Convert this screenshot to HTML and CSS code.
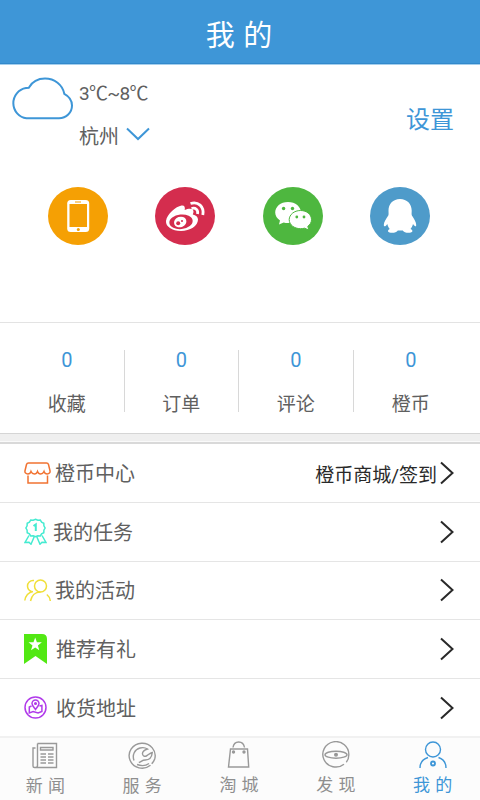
FILE: index.html
```html
<!DOCTYPE html>
<html lang="zh-CN">
<head>
<meta charset="utf-8">
<meta name="viewport" content="width=device-width, initial-scale=1">
<title>我的</title>
<link rel="stylesheet" href="styles.css">
</head>
<body>
<div class="app">
  <header class="header"><h1>我 的</h1></header>

  <section class="profile">
    <div class="weather">
      <svg class="cloud" width="64" height="44" viewBox="0 0 64 44"><path d="M16.500 41.300a15 15.300 0 0 1-.5-30.300l2.800-.3C22 5.200 28 1.600 35 1.600c9.500 0 17.500 6 19.300 15.200C59 19.300 62 24 62 28.500c0 7-5.700 12.800-13 12.800z"/></svg>
      <div class="weather-text">
        <span class="temp">3℃~8℃</span>
        <span class="city">杭州<svg width="24" height="14" viewBox="0 0 24 14"><path d="M1 1.500l11 10.500L23 1.500"/></svg></span>
      </div>
    </div>
    <a class="settings">设置</a>
    <div class="logins">
      <svg width="60" height="58" viewBox="0 0 60 58"><ellipse cx="30" cy="29" rx="30" ry="29" fill="#f5a004"/><rect x="19.200" y="13" width="22" height="32" rx="3.500" fill="#fff"/><path d="M21.500 17h17.500v23h-17.500zM27 14.500h6v1h-6z" fill="#f5a004"/><circle cx="30.300" cy="42.500" r="1.500" fill="#f5a004"/></svg>
      <svg width="60" height="58" viewBox="0 0 60 58"><ellipse cx="30" cy="29" rx="30" ry="29" fill="#d42d4e"/><path d="M11 34c1-7 10-14.500 15.500-15.500 3-.4 3.800 1.500 3.200 4.500 4-1.500 8.500-2 8.800 1.500.1 1-.5 2-.7 3 3 .8 5.200 2.500 5.200 5 0 6.500-8 11.500-17 11.500S10.500 39.500 11 34z" fill="#fff"/><ellipse cx="26" cy="34.800" rx="11.700" ry="7.300" transform="rotate(-6 26 34.800)" fill="#d42d4e"/><ellipse cx="25.200" cy="35" rx="6.300" ry="5.200" transform="rotate(-20 25.200 35)" fill="#fff"/><circle cx="23.200" cy="36.300" r="2" fill="#d42d4e"/><circle cx="27" cy="34" r="1" fill="#d42d4e"/><path d="M35.500 16.500c7.500-2.500 14 3 12.300 11.500M36.500 21.500c4-1.200 7 1.300 6 5.500" fill="none" stroke="#fff" stroke-width="2.800"/></svg>
      <svg width="60" height="58" viewBox="0 0 60 58"><ellipse cx="30" cy="29" rx="30" ry="29" fill="#4eb73f"/><path d="M25 15c7.500 0 13 4.700 13 10.600S32.500 36 25 36c-1.500 0-3-.2-4.300-.6L16 37.500l1-4c-3-2-4.800-4.700-4.800-7.900C12.200 19.700 17.500 15 25 15z" fill="#fff"/><path d="M37.500 23.500c6.300 0 11 4 11 9.200 0 2.800-1.500 5-3.700 6.600l1 3.700-4.200-1.800c-1.300.3-2.700.5-4.100.5-6.300 0-11.300-4-11.300-9s5-9.200 11.300-9.200z" fill="#fff" stroke="#4eb73f"/><g fill="#4eb73f"><circle cx="20.600" cy="21.500" r="1.700"/><circle cx="29.500" cy="21.500" r="1.700"/><circle cx="33.800" cy="30" r="1.400"/><circle cx="41" cy="30" r="1.400"/></g></svg>
      <svg width="60" height="58" viewBox="0 0 60 58"><ellipse cx="30" cy="29" rx="30" ry="29" fill="#4e9bca"/><path d="M30 12c7 0 11.700 5 11.700 11.500 0 2-.3 3.800.2 5 2.200 3.500 4.300 6.500 4.300 9.500 0 1-.3 1.500-1 1.200-1-.4-1.700-1.200-2.200-2.200-.5 2-1.400 3.700-2.500 5 1.600.8 2.300 1.600 1.800 2.600-.8 1.700-8 2-9.500-1h-5c-1.500 3-9 2.700-9.700 1-.5-1 .3-1.800 1.700-2.600-1.200-1.300-2-3-2.500-5-.6 1-1.200 1.800-2 2.200-.9.300-1.500-.2-1.500-1.200 0-3 2.300-6 4.500-9.500.5-1.200.2-3 .2-5C18.500 17 23 12 30 12z" fill="#fff"/></svg>
    </div>
  </section>

  <section class="stats">
    <div class="stat"><b>0</b><span>收藏</span></div>
    <div class="stat"><b>0</b><span>订单</span></div>
    <div class="stat"><b>0</b><span>评论</span></div>
    <div class="stat"><b>0</b><span>橙币</span></div>
  </section>
  <div class="separator"></div>

  <main class="menu">
    <a class="row">
      <svg class="icon orange" width="27" height="22" viewBox="0 0 27 22"><path d="M4.500 1h18c1.200 0 1.700.5 2 1.500l1.500 6.200c.4 2-1 3.300-2.800 3.300-2 0-2.800-1.200-3.200-2.500C19.200 11.300 18 12 16.600 12s-2.500-.9-3.100-2.500C12.900 11.100 11.800 12 10.400 12S7.800 11.300 7 9.500C6.600 10.800 5.800 12 3.800 12 2 12 .6 10.700 1 8.700l1.500-6.200C2.800 1.500 3.300 1 4.500 1zM4 13.500V21h19.500v-7.500"/></svg>
      <span class="label">橙币中心</span><span class="note">橙币商城/签到</span>
      <svg class="chevron" width="14" height="24" viewBox="0 0 14 24"><path d="M1 1.500L12.500 12 1 22.500"/></svg>
    </a>
    <a class="row narrow">
      <svg class="icon teal" width="23" height="27" viewBox="0 0 23 27"><path d="M11.500 1.200l2.300 1 2.500-.1 1.300 2 2.200 1.200.1 2.500 1.200 2.200-1.200 2.200-.1 2.500-2.200 1.200-1.300 2-2.500-.1-2.300 1-2.300-1-2.500.1-1.300-2-2.200-1.200-.1-2.500L1.900 10l1.200-2.200.1-2.500 2.200-1.200 1.300-2 2.500.1zM5 17.500l-4 7 4-.3 2 2 3.200-7.500M18 17.500l4 7-4-.3-2 2-3.200-7.500"/><path class="numeral" d="M9.500 8l2.300-1.600V13"/></svg>
      <span class="label">我的任务</span>
      <svg class="chevron" width="14" height="24" viewBox="0 0 14 24"><path d="M1 1.500L12.500 12 1 22.500"/></svg>
    </a>
    <a class="row">
      <svg class="icon yellow" width="27" height="23" viewBox="0 0 27 23"><circle cx="16.500" cy="7" r="6"/><path d="M10 1.600C6 1 3.500 4 3.500 7c0 2.500 1.500 4.500 4 5.500M.8 21.500c.7-4.500 3.700-8 8.200-9M6.500 22c1-5 4.500-9 10-9M22.800 15.500c2 1.500 3.200 3.700 3.500 6.500"/></svg>
      <span class="label">我的活动</span>
      <svg class="chevron" width="14" height="24" viewBox="0 0 14 24"><path d="M1 1.500L12.500 12 1 22.500"/></svg>
    </a>
    <a class="row">
      <svg class="icon" width="23" height="30" viewBox="0 0 23 30"><path d="M0 0h18q5 0 5 5v25l-11.500-8L0 30z" fill="#52e813"/><path d="M11.200 3.500l1.700 4.700 5 .1-4 3.100 1.400 4.900-4.100-2.900-4.200 2.900 1.500-4.900-4-3.100 5-.1z" fill="#fff"/></svg>
      <span class="label">推荐有礼</span>
      <svg class="chevron" width="14" height="24" viewBox="0 0 14 24"><path d="M1 1.500L12.500 12 1 22.500"/></svg>
    </a>
    <a class="row">
      <svg class="icon purple" width="23" height="23" viewBox="0 0 23 23"><circle cx="11.500" cy="11.500" r="10.500"/><path d="M11.500 13.500C9.500 10.800 8 9.300 8 7.500a3.500 3.500 0 0 1 7 0c0 1.800-1.500 3.300-3.500 6zM7.500 10L5.300 11v6l3.800-1.500 5 1.500 3.800-1.500v-6L15.500 10"/><circle cx="11.500" cy="7.500" r=".8"/></svg>
      <span class="label">收货地址</span>
      <svg class="chevron" width="14" height="24" viewBox="0 0 14 24"><path d="M1 1.500L12.500 12 1 22.500"/></svg>
    </a>
  </main>

  <nav class="tabs">
    <a class="tab low"><svg width="28" height="28" viewBox="0 0 28 28"><path d="M6.500 1.500h19v24h-22c-1 0-1.500-.5-1.500-1.500V6h2.500M6.500 1.500v22c0 1-.5 2-2 2M9.500 5.500h12.500v2.500H9.500z"/><path stroke-dasharray="5.500 2" d="M9.500 12h13M9.500 15h13M9.500 18h13M9.500 21h13"/></svg><span>新 闻</span></a>
    <a class="tab low"><svg width="28" height="28" viewBox="0 0 28 28"><path d="M22.500 23.300A13 12.500 0 1 1 26.700 17c-.7 2-1.700 3.500-3 4.700"/><path d="M6 18.500C4 13 6.500 7.500 12 6c3-.8 5.500-.3 7.500 1-3 1-5.300 2.500-5 5 .3 2 2.200 2.800 3.800 2 2-1 3.500-3 6-3.500-.5 4.500-3 7.500-7 7.500-3.500 0-4 2-6.500 2.500M9 22.500c4 1.500 8.500 1.500 12-1"/></svg><span>服 务</span></a>
    <a class="tab"><svg width="28" height="28" viewBox="0 0 28 28"><path d="M5.500 8h17l1.200 18H3.500zM8 6.500C8.500 3 11 1 13.700 1s5.200 2 5.800 5.500"/><circle cx="8.500" cy="11" r="1" class="solid"/><circle cx="19" cy="11" r="1" class="solid"/></svg><span>淘 城</span></a>
    <a class="tab"><svg width="28" height="28" viewBox="0 0 28 28"><path d="M22 23.200A13 12.700 0 1 1 26.800 14c0 3-1 5.500-2.500 7.300"/><ellipse cx="14" cy="13.700" rx="11" ry="3.500"/><circle cx="14" cy="13.700" r="1.300" class="solid"/></svg><span>发 现</span></a>
    <a class="tab active"><svg width="28" height="28" viewBox="0 0 28 28"><circle cx="14" cy="8.500" r="7.500"/><path d="M1 27c0-5 3-9 8-10.500M19.500 16.500c4.500 1.500 7.500 5.500 7.500 10.500"/><circle cx="14" cy="22.500" r="2" stroke-width="1.800"/></svg><span>我 的</span></a>
  </nav>
</div>
</body>
</html>
```
FILE: styles.css
```css
* { box-sizing: border-box; }

body {
  margin: 0;
  background: #fff;
  color: #606060;
  font-family: Roboto, "Noto Sans CJK SC", sans-serif;
}

svg { display: block; flex: none; fill: none; }

.app {
  display: flex;
  flex-direction: column;
  width: 480px;
  height: 800px;
  overflow: hidden;
}
.app > * { flex-shrink: 0; }

.header {
  height: 65px;
  padding-top: 8px;
  background: #3e96d7;
  border-bottom: 1px solid #a5cfed;
  box-shadow: inset 0 -1px #3289cb;
  color: #fff;
  text-align: center;
}

.header h1 {
  margin: 0;
  padding-right: 2px;
  font-size: 29px;
  font-weight: 400;
  line-height: 56px;
  word-spacing: 1.5px;
}

.profile {
  display: grid;
  grid-template-columns: 1fr auto;
  grid-template-rows: 122px 1fr;
  height: 258px;
  border-bottom: 1px solid #e3e3e3;
}

.weather { display: flex; padding: 12px 0 0 10px; }
.cloud { stroke: #3e96d7; stroke-width: 2; }
.weather-text { display: flex; flex-direction: column; padding-left: 5px; }
.temp { height: 34px; font-size: 19px; line-height: 34px; letter-spacing: -0.7px; }
.city { display: flex; align-items: center; gap: 7px; height: 48px; font-size: 20px; }
.city svg { stroke: #3e96d7; stroke-width: 2; margin-top: -3px; }
.settings { padding: 37px 26px 0 0; color: #3e96d7; font-size: 24px; line-height: 36px; }

.logins {
  grid-column: 1 / -1;
  display: flex;
  justify-content: space-between;
  align-items: flex-start;
  padding: 0 50px 0 48px;
}

.stats {
  display: grid;
  grid-template-columns: repeat(4, 114.5px);
  height: 110px;
  padding: 27px 0 0 10px;
}

.stat {
  display: flex;
  flex-direction: column;
  align-items: center;
  height: 62px;
  border-right: 1px solid #d8d8d8;
}
.stat:last-child { border-right: 0; }
.stat b { color: #3e96d7; font-size: 20px; font-weight: 400; line-height: 20px; }
.stat span { margin-top: 21px; font-size: 19px; line-height: 28px; }

.separator {
  height: 11px;
  background: #efefef;
  border-top: 1px solid #d5d5d5;
  border-bottom: 2px solid #d9d9d9;
  box-shadow: inset 0 -1px #fafafa;
}

.menu { height: 292px; }
.row {
  display: flex;
  align-items: center;
  height: 58.8px;
  padding: 0 26px 0 24px;
  border-bottom: 1px solid #e5e5e5;
}
.row:last-child { height: 56.8px; border-bottom: 0; }
.label { flex: 1; padding-top: 2px; font-size: 20px; line-height: 30px; }
.icon { stroke-width: 1.5; }
.row .icon { margin-right: 4px; }
.row .icon[width="23"] { margin-right: 9px; }
.row.narrow .icon[width="23"] { margin-right: 6px; }
.note { margin-right: 3px; padding-top: 1px; color: #292929; font-size: 19px; }
.chevron { stroke: #292929; stroke-width: 2; }
.orange { stroke: #f17332; }
.teal { stroke: #45ebd1; }
.teal .numeral { stroke-width: 2; }
.yellow { stroke: #f0df38; }
.purple { stroke: #b13bea; }

.tabs {
  display: grid;
  grid-template-columns: repeat(5, 96.8px);
  justify-content: center;
  height: 64px;
  padding-right: 2px;
  background: #fcfcfc;
  border-top: 2px solid #f1f1f1;
}
.tab {
  display: flex;
  flex-direction: column;
  align-items: center;
  padding-top: 3px;
  color: #8f8f8f;
  font-size: 17px;
}
.tab.low { padding-top: 4px; }
.tab svg { stroke: #999; stroke-width: 1.4; }
.tab .solid { fill: currentColor; }
.tab span { margin-top: 3px; line-height: 26px; word-spacing: 1px; }
.tab.active { color: #3e96d7; }
.tab.active svg { stroke: #3e96d7; }
```
